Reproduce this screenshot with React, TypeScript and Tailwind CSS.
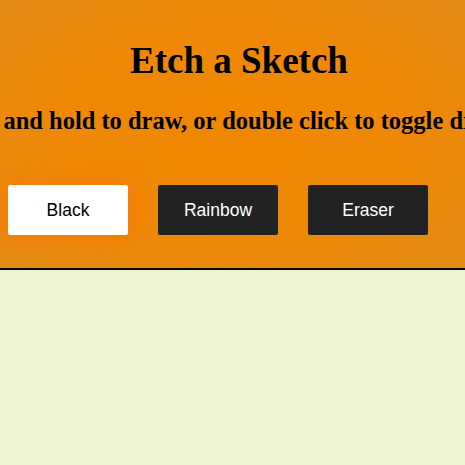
import React, { useState } from 'react';

const modes = ['Black', 'Rainbow', 'Eraser'];

const App = () => {
    const [mode, setMode] = useState('Black');

    return (
        <div className="min-h-screen w-full overflow-hidden bg-[#eef3d5]">
            {/* Header */}
            <header className="h-[270px] border-b-2 border-black bg-[radial-gradient(ellipse_at_center,#f08700_0%,#ee8806_55%,#e28c16_100%)]">
                <h1 className="pt-[40px] pl-[13px] text-center text-[37px] leading-[42px] font-bold text-black font-['Georgia','Liberation_Serif',serif]">
                    Etch a Sketch
                </h1>
                <div className="mt-[24px] flex justify-center pl-[13px]">
                    <h2 className="whitespace-nowrap text-[24.5px] leading-[30px] font-bold text-black font-['Georgia','Liberation_Serif',serif]">
                        Click and hold to draw, or double click to toggle drawing
                    </h2>
                </div>

                {/* Mode buttons */}
                <div className="mt-[49px] flex gap-[30px] pl-2">
                    {modes.map((m) => (
                        <button
                            key={m}
                            onClick={() => setMode(m)}
                            className={`h-[50px] w-[120px] rounded-[2px] text-[17.5px] font-['Liberation_Sans',Arial,sans-serif] ${
                                mode === m
                                    ? 'bg-white text-black shadow-[0_0_16px_6px_#f47d08]'
                                    : 'bg-[#222222] text-white'
                            }`}
                        >
                            {m}
                        </button>
                    ))}
                </div>
            </header>

            {/* Drawing area */}
            <div className="h-[195px]" />
        </div>
    );
};

export default App;
